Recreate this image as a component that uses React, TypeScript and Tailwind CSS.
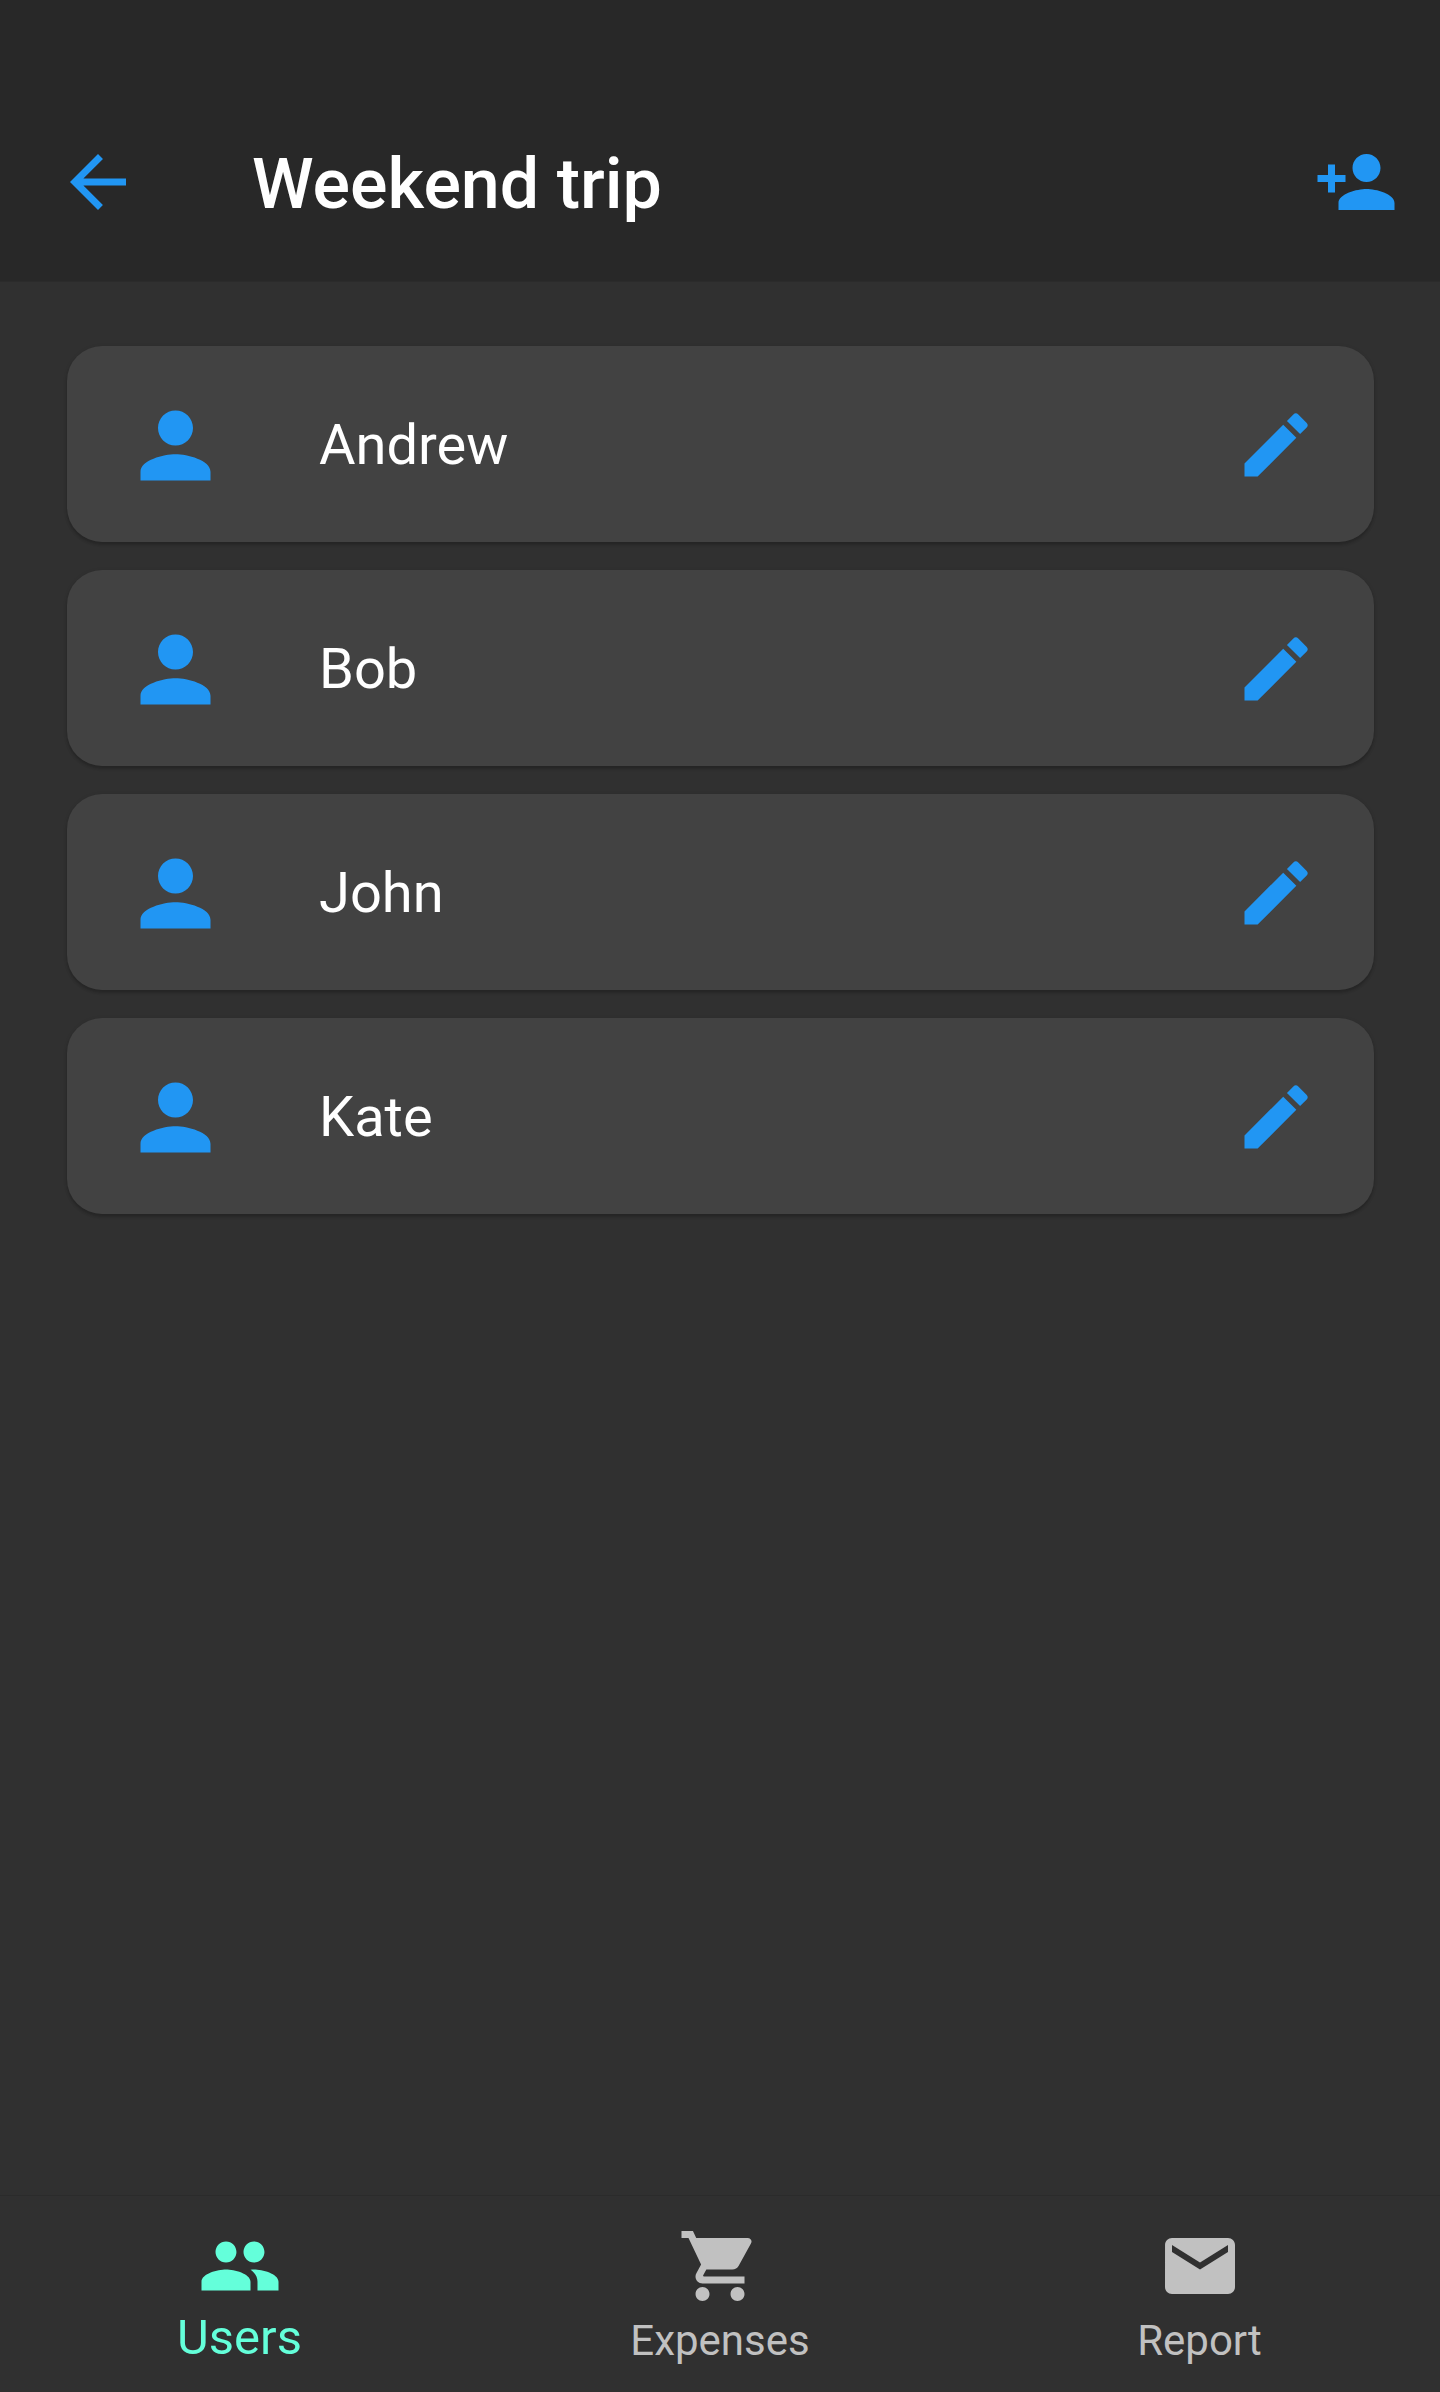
import React from "react";
import { MdArrowBack, MdPerson, MdEdit, MdShoppingCart, MdEmail } from "react-icons/md";

const users = ["Andrew", "Bob", "John", "Kate"];

function PersonAddIcon() {
  return (
    <svg viewBox="0 0 24 24" className="size-[84px]" fill="currentColor">
      <path d="M15 12c2.21 0 4-1.79 4-4s-1.79-4-4-4-4 1.79-4 4 1.79 4 4 4zm-9-2V7H4v3H1v2h3v3h2v-3h3v-2H6zm9 4c-2.67 0-8 1.34-8 4v2h16v-2c0-2.66-5.33-4-8-4z" />
    </svg>
  );
}

function PeopleIcon() {
  return (
    <svg viewBox="0 0 24 24" className="mr-px size-[84px]" fill="currentColor">
      <path d="M16 11c1.66 0 2.99-1.34 2.99-3S17.66 5 16 5c-1.66 0-3 1.34-3 3s1.34 3 3 3zm-8 0c1.66 0 2.99-1.34 2.99-3S9.66 5 8 5C6.34 5 5 6.34 5 8s1.34 3 3 3zm0 2c-2.33 0-7 1.17-7 3.5V19h14v-2.5c0-2.33-4.67-3.5-7-3.5zm8 0c-.29 0-.62.02-.97.05 1.16.84 1.97 1.97 1.97 3.45V19h6v-2.5c0-2.33-4.67-3.5-7-3.5z" />
    </svg>
  );
}

function UserCard({ name }: { name: string }) {
  return (
    <li className="flex h-[196px] items-center rounded-[35px] bg-[#424242] pr-[55.5px] pl-14 shadow-[0_3px_3px_rgba(0,0,0,0.16),0_1px_4px_rgba(0,0,0,0.12)]">
      <MdPerson className="mt-[2px] size-[105px] text-[#2196f3]" />
      <span className="mt-px ml-[91.5px] flex-1 text-[56px] leading-[66px] text-white">{name}</span>
      <button aria-label={`Edit ${name}`} className="mt-px">
        <MdEdit className="size-[84px] text-[#2196f3]" />
      </button>
    </li>
  );
}

export default function App() {
  return (
    <div className="flex h-[2392px] w-[1440px] flex-col overflow-hidden bg-[#303030] font-[Roboto,sans-serif]">
      <header className="flex h-[282px] shrink-0 items-end border-b border-[#2b2b2b] bg-[#282828] pr-[42px] pb-[57px] pl-14">
        <button aria-label="Back">
          <MdArrowBack className="size-[84px] text-[#2196f3]" />
        </button>
        <h1 className="ml-28 flex-1 text-[70px] leading-[80px] font-medium text-white">Weekend trip</h1>
        <button aria-label="Add user" className="text-[#2196f3]">
          <PersonAddIcon />
        </button>
      </header>
      <main className="flex-1 px-[66.5px] pt-[64.4px]">
        <ul className="flex flex-col gap-7">
          {users.map((name) => (
            <UserCard key={name} name={name} />
          ))}
        </ul>
      </main>
      <nav className="grid h-[197px] shrink-0 grid-cols-3 border-t border-[#2b2b2b] pt-7 text-[#c1c1c1]">
        <a className="flex flex-col items-center text-[#64ffda]">
          <PeopleIcon />
          <span className="mt-px mr-px text-[49px] leading-[57px]">Users</span>
        </a>
        <a className="flex flex-col items-center">
          <MdShoppingCart className="size-[84px]" />
          <span className="mt-2 text-[42px] leading-[50px]">Expenses</span>
        </a>
        <a className="flex flex-col items-center">
          <MdEmail className="size-[84px]" />
          <span className="mt-2 mr-px text-[42px] leading-[50px]">Report</span>
        </a>
      </nav>
    </div>
  );
}
